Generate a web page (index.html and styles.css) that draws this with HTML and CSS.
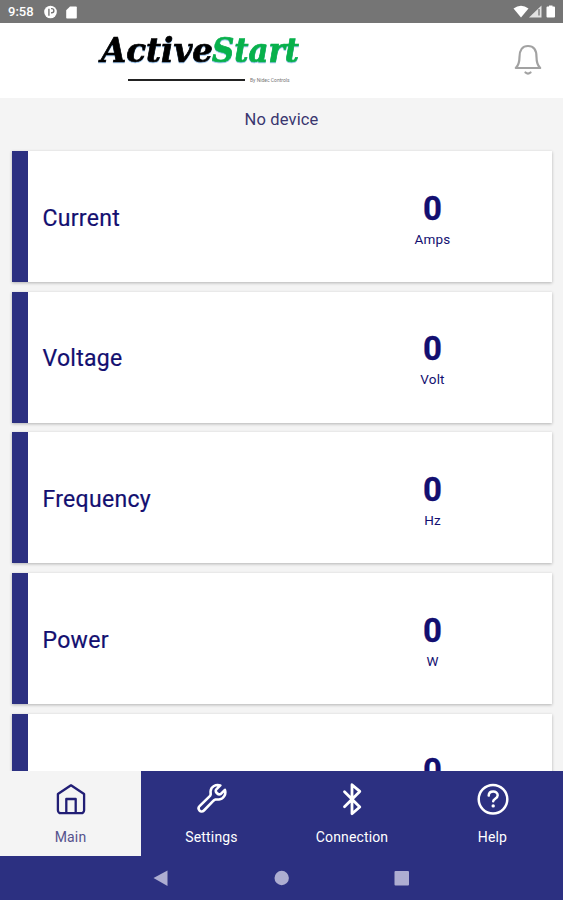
FILE: index.html
```html
<!DOCTYPE html>
<html lang="en">
<head>
<meta charset="utf-8">
<title>ActiveStart</title>
<link rel="stylesheet" href="styles.css">
</head>
<body>
<div class="status">
  <span class="time">9:58</span>
  <svg class="st-p" width="13" height="14" viewBox="0 0 14 14"><circle cx="7" cy="7" r="6.800" fill="#fff"/><path d="M5.300 11V3.400M7.600 3.400h.8a2.200 2.200 0 0 1 0 4.400h-.8" fill="none" stroke="#757575" stroke-width="1.500"/></svg>
  <svg class="st-sd" width="11" height="13" viewBox="0 0 11 13"><path d="M4 .5h6a.8.8 0 0 1 .8.8v10.400a.8.8 0 0 1-.8.800H1a.8.8 0 0 1-.8-.8V4.300z" fill="#fff"/></svg>
  <svg class="st-right" width="44" height="14" viewBox="0 0 44 14"><path d="M1.500 3.500Q9-2 16.500 3.500L9 12.500z" fill="#fff"/><path d="M29.500 .5V12.500H17z" fill="#e2e2e2"/><path d="M27 4v6.500" stroke="#757575" stroke-width="1.300"/><path d="M37 1.500V.5h3.500v1H42q1 0 1 1v9q0 1-1 1h-6.500q-1 0-1-1v-9q0-1 1-1z" fill="#fff"/></svg>
</div>
<header class="header">
  <div class="brand">
    <svg class="logo" width="210" height="34" viewBox="0 0 210 34"><text x="8" y="27" textLength="112" lengthAdjust="spacingAndGlyphs">Active</text><text class="green" x="119" y="27" textLength="87" lengthAdjust="spacingAndGlyphs">Start</text></svg>
    <div class="tagline"><span class="rule"></span><span class="by">By Nidec Controls</span></div>
  </div>
  <svg class="bell" width="28" height="32" viewBox="0 0 28 32" fill="none" stroke="#a2a2a2" stroke-width="2.200" stroke-linejoin="round" stroke-linecap="round"><path d="M1.800 24c3-3 3.700-6 3.700-11C5.500 6 8.500 2 14 2s8.500 4 8.500 11c0 5 .7 8 3.700 11z"/><path d="M11.500 28.500q2.500 2.200 5 0"/></svg>
</header>
<main class="content">
  <p class="device">No device</p>
  <div class="cards">
    <section class="card"><h2>Current</h2><div class="reading"><b>0</b><span>Amps</span></div></section>
    <section class="card"><h2>Voltage</h2><div class="reading"><b>0</b><span>Volt</span></div></section>
    <section class="card"><h2>Frequency</h2><div class="reading"><b>0</b><span>Hz</span></div></section>
    <section class="card"><h2>Power</h2><div class="reading"><b>0</b><span>W</span></div></section>
    <section class="card"><h2></h2><div class="reading"><b>0</b><span>&nbsp;</span></div></section>
  </div>
</main>
<nav class="tabs">
  <a class="tab active"><svg width="32" height="34" viewBox="0 0 32 34" fill="none" stroke="currentColor" stroke-width="2.300" stroke-linejoin="round"><path d="M2.900 12 16 3.300 29.100 12v16.200a3 3 0 0 1-3 3H5.900a3 3 0 0 1-3-3z"/><path d="M11.300 31V17h9.400v14"/></svg><span>Main</span></a>
  <a class="tab"><svg width="32" height="34" viewBox="0 0 32 34" fill="none" stroke="currentColor" stroke-width="2.600" stroke-linejoin="round" stroke-linecap="round"><path d="M24.300 3.400c-4.500-1.500-9.300 1.200-9.700 5.700-.1 1.500.2 2.800 0 3.600-.2.900-.9 1.600-1.800 2.400L3.600 24.200c-2.800 2.800 1.300 7.300 4.300 4.300l9.100-9.300c.8-.9 1.500-1.400 2.400-1.600 1-.2 2.100.1 3.600-.1 4.600-.6 7.400-5.200 5.900-9.600l-4.300 4.200c-2.300 1.200-5.800-2-4.500-4.500z"/></svg><span>Settings</span></a>
  <a class="tab"><svg width="32" height="34" viewBox="0 0 32 34" fill="none" stroke="currentColor" stroke-width="2.800" stroke-linejoin="round" stroke-linecap="round"><path d="m8.500 9.700 15.300 15.300-7.800 6.700V2.700l7.800 6.700-15.300 15.300"/></svg><span>Connection</span></a>
  <a class="tab"><svg width="32" height="34" viewBox="0 0 32 34" fill="none" stroke="currentColor" stroke-width="2.500" stroke-linecap="round"><circle cx="16" cy="17.300" r="14.300"/><path d="M11.700 13.600c.2-5.400 9-5.300 9-.3 0 3.400-4.500 3.300-4.500 6"/><circle cx="16.200" cy="23.900" r="1.700" fill="currentColor" stroke="none"/></svg><span>Help</span></a>
</nav>
<footer class="sysnav">
  <svg width="563" height="44" viewBox="0 0 563 44" fill="#adadd1"><path d="M153.500 22 167.500 14.500v15.500z"/><circle cx="281.700" cy="22" r="7.200"/><rect x="394.500" y="15" width="14.500" height="14.500" rx="1"/></svg>
</footer>
</body>
</html>
```
FILE: styles.css
```css
* { box-sizing: border-box; }
body {
  margin: 0;
  width: 563px;
  height: 900px;
  overflow: hidden;
  display: flex;
  flex-direction: column;
  background: #f4f4f4;
  color: #130f70;
  font-family: Roboto, "Liberation Sans", sans-serif;
}
svg { display: block; flex: none; }
.status {
  height: 23px;
  flex: none;
  display: flex;
  align-items: center;
  padding: 1px 7px 0 8px;
  background: #757575;
  color: #fff;
}
.time { width: 36px; font-size: 13px; font-weight: 500; line-height: 22px; }
.st-sd { margin-left: 9px; }
.st-right { margin-left: auto; }
.header {
  height: 75px;
  flex: none;
  display: flex;
  justify-content: space-between;
  padding: 12px 21px 0 93px;
  background: #fff;
}
.logo { overflow: visible; }
.logo text {
  font: italic bold 33px "DejaVu Serif", serif;
  fill: #000;
  stroke: #000;
  stroke-width: .7px;
  filter: drop-shadow(.5px 1px 0 #9cc5ee);
}
.logo .green { fill: #08b14b; stroke: #08b14b; }
.tagline { display: flex; align-items: center; height: 16px; padding: 7px 0 0 35px; margin-top: -1px; }
.rule { width: 117px; height: 2px; background: #222; margin-right: 5px; }
.by { font-size: 5px; line-height: 8px; color: #777; white-space: nowrap; }
.bell { margin-top: 9px; }
.content { height: 673px; flex: none; overflow: hidden; }
.device {
  margin: 0;
  height: 53px;
  padding-top: 12px;
  text-align: center;
  font-size: 16.5px;
  line-height: 20px;
  letter-spacing: .15px;
  color: #39366f;
}
.cards { display: grid; grid-template-columns: 540px; gap: 9.7px; padding-left: 12px; }
.card {
  height: 131px;
  display: flex;
  align-items: center;
  border-left: 16px solid #2c3081;
  background: #fff;
  box-shadow: 0 1px 3px rgba(0, 0, 0, .27);
}
.card h2 {
  flex: 1;
  margin: 4px 0 0;
  padding-left: 14.5px;
  font-size: 23px;
  line-height: 30px;
  font-weight: 400;
  letter-spacing: .3px;
  -webkit-text-stroke: .2px currentColor;
}
.reading { width: 240px; padding: 3px 0 0 1px; display: flex; flex-direction: column; align-items: center; }
.reading b { font-size: 33px; line-height: 38px; font-weight: 700; -webkit-text-stroke: .3px currentColor; }
.reading span { font-size: 13.5px; line-height: 16px; margin-top: 3px; letter-spacing: .2px; }
.tabs { height: 85px; flex: none; display: grid; grid-template-columns: 141px 141px 140px 141px; background: #2c3081; }
.tab { display: flex; flex-direction: column; align-items: center; padding-top: 11px; color: #fff; }
.tab span { margin-top: 12px; font-size: 14px; line-height: 18px; letter-spacing: .15px; }
.tab.active { background: #f4f4f4; color: #211e75; }
.tab.active span { color: #55528d; }
.sysnav { height: 44px; flex: none; background: #2c3081; }
```
